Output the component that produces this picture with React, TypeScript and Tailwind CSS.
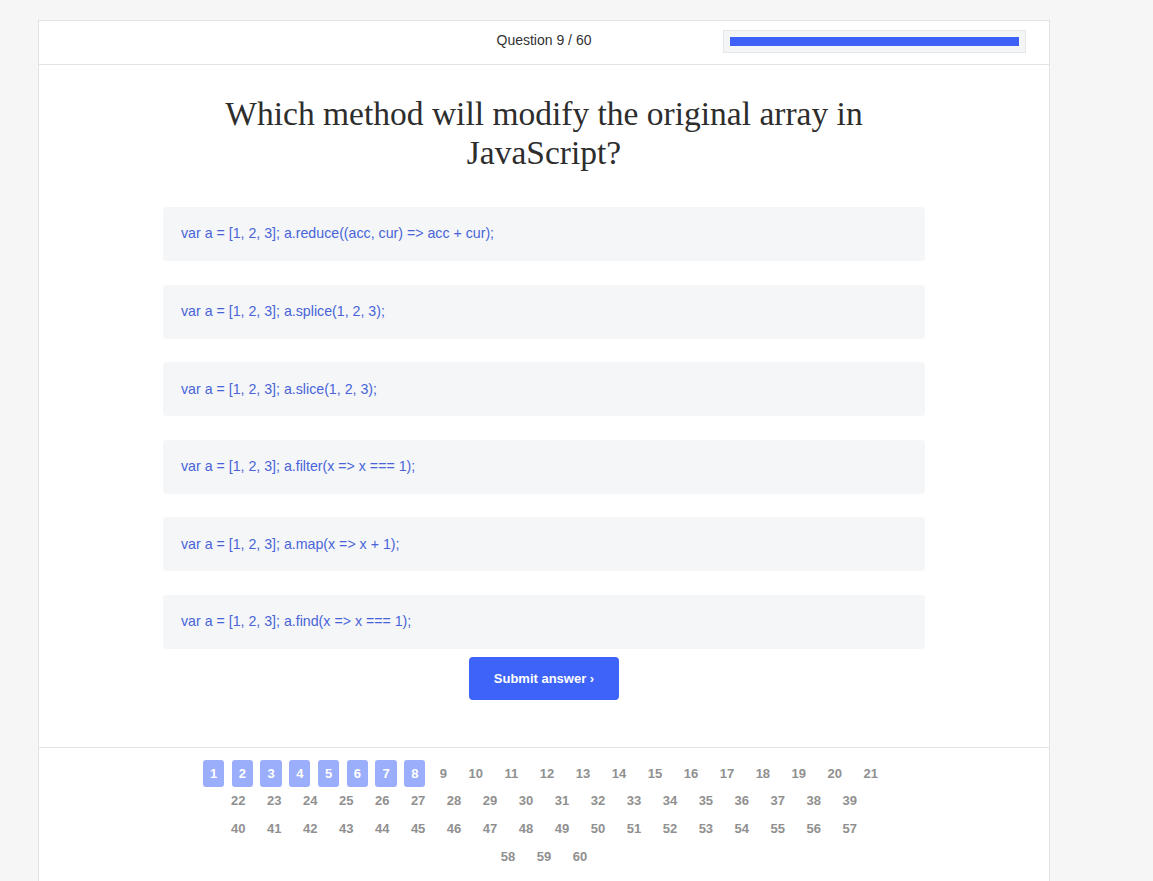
import React from "react";

const options = [
  "var a = [1, 2, 3]; a.reduce((acc, cur) => acc + cur);",
  "var a = [1, 2, 3]; a.splice(1, 2, 3);",
  "var a = [1, 2, 3]; a.slice(1, 2, 3);",
  "var a = [1, 2, 3]; a.filter(x => x === 1);",
  "var a = [1, 2, 3]; a.map(x => x + 1);",
  "var a = [1, 2, 3]; a.find(x => x === 1);",
];

const range = (from: number, to: number) =>
  Array.from({ length: to - from + 1 }, (_, i) => from + i);

const rows = [range(1, 21), range(22, 39), range(40, 57), range(58, 60)];
const answered = 8;

export default function App() {
  return (
    <div
      className="min-h-[881px] bg-[#f6f6f6] pt-5 pl-[38px]"
      style={{ fontFamily: "'Liberation Sans', Arial, sans-serif" }}
    >
      <div className="w-[1012px] min-h-[870px] bg-white border border-[#e3e3e3]">
        {/* Header */}
        <div className="h-[44px] grid grid-cols-[1fr_auto_1fr] items-center border-b border-[#e3e3e3]">
          <div />
          <p className="text-[14px] text-[#333] leading-none pb-[5px]">Question 9 / 60</p>
          <div className="flex justify-end pr-[23px] pb-[2px]">
            <div className="w-[303px] h-[23px] bg-[#f4f5f7] border border-[#e6e7ea] px-[6px] py-[6px]">
              <div className="h-full w-full bg-[#3d61f6]" />
            </div>
          </div>
        </div>

        {/* Question */}
        <div className="flex flex-col items-center pt-[29px]">
          <h1
            className="w-[762px] text-center text-[33.5px] leading-[39px] text-[#2d2d2d]"
            style={{ fontFamily: "'Liberation Serif', 'Times New Roman', serif" }}
          >
            Which method will modify the original array in JavaScript?
          </h1>

          <div className="w-[762px] mt-[35px] flex flex-col gap-[23.6px]">
            {options.map((o, i) => (
              <div
                key={i}
                className="h-[54px] flex items-center px-[18px] rounded bg-[#f5f6f8] text-[14.2px] text-[#4864d8] cursor-pointer"
              >
                {o}
              </div>
            ))}
          </div>

          <button className="mt-2 w-[150px] h-[43px] rounded bg-[#3d63f9] text-white text-[13px] font-bold">
            Submit answer ›
          </button>
        </div>

        {/* Pagination */}
        <div className="mt-[47px] border-t border-[#e3e3e3] pt-[12px] flex flex-col items-center gap-[0.7px]">
          {rows.map((row, r) => (
            <div key={r} className="flex justify-center gap-[7.5px]">
              {row.map((n) => (
                <span
                  key={n}
                  className={
                    n <= answered
                      ? "h-[27px] px-[7px] flex items-center rounded-[3px] bg-[#9aaefb] text-white text-[13px] font-bold"
                      : "h-[27px] px-[7px] flex items-center text-[#909090] text-[13px] font-bold"
                  }
                >
                  {n}
                </span>
              ))}
            </div>
          ))}
        </div>
      </div>
    </div>
  );
}
